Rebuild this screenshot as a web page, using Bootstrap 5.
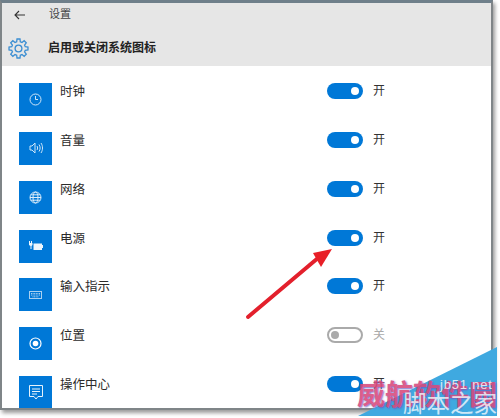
<!DOCTYPE html>
<html lang="zh-CN">
<head>
  <meta charset="UTF-8">
  <title>设置</title>
  <meta name="viewport" content="width=device-width, initial-scale=1">
  <link href="https://cdn.jsdelivr.net/npm/bootstrap@5.3.3/dist/css/bootstrap.min.css" rel="stylesheet">
  <style>
    body { width: 500px; height: 418px; overflow: hidden; background: #fff; font-family: "Liberation Sans", "Noto Sans CJK SC", sans-serif; color: #333; }
    .win { width: 493px; height: 410px; border: solid #7f8588; border-width: 3px 2px 2px 2px; border-top-color: #6f7f8a; box-shadow: 2px 3px 4px rgba(0,0,0,.4); overflow: hidden; background: #fff; }
    .win-head { height: 63px; background: #e6e6e6; }
    .head-top { height: 23px; padding-left: 12px; font-size: 11px; }
    .head-top span { margin-left: 24px; color: #444; }
    .head-main { height: 40px; padding: 4px 0 0 6px; font-size: 12px; font-weight: 700; color: #222; }
    .head-main span { margin-left: 19px; }
    .rows { padding: 17px 0 0 17px; }
    .sys-row { height: 48.85px; flex: none; }
    .tile { width: 33px; height: 33px; background: #0078d7; flex: none; }
    .sys-name { width: 275px; padding: 1px 0 0 8px; font-size: 12.5px; line-height: 16px; color: #2b2b2b; }
    .tog { width: 36px; height: 16px; border-radius: 8px; background: #0078d7; position: relative; flex: none; }
    .tog::after { content: ""; position: absolute; width: 8px; height: 8px; border-radius: 50%; background: #fff; top: 4px; right: 4px; }
    .tog.off { background: #fff; border: 2px solid #aaa; }
    .tog.off::after { background: #aaa; top: 2px; right: auto; left: 2px; }
    .tog-text { margin-left: 10px; font-size: 12px; line-height: 16px; color: #333; }
    .tog-text.off { color: #aaa; }
    .over { position: absolute; left: 0; top: 0; pointer-events: none; }
    .wm-a { position: absolute; left: 440px; top: 378px; color: #f2f9fd; font-size: 13px; line-height: 14px; letter-spacing: .8px; opacity: .85; }
    .wm-b { position: absolute; left: 403px; top: 392px; color: #f2f9fd; font-size: 23.500px; line-height: 24px; white-space: nowrap; opacity: .8; }
    .wm-c { position: absolute; left: 357px; top: 381px; color: #d8487c; font-size: 28px; line-height: 30px; font-weight: 700; white-space: nowrap; opacity: .88; text-shadow: 1px 1px 2px #6a5cc4; }
  </style>
</head>
<body class="position-relative">

  <div class="win">
    <div class="win-head">
      <div class="head-top d-flex align-items-center">
        <svg width="11" height="10" viewBox="0 0 11 10" fill="none" stroke="#333" stroke-width="1.1"><path d="M11 5H1M5 1 1 5l4 4"/></svg>
        <span>设置</span>
      </div>
      <div class="head-main d-flex align-items-center">
        <svg width="21" height="21" viewBox="-10.500 -10.500 21 21" fill="none" stroke="#3b8ed2" stroke-width="1.300"><path d="M6.760-1.810 9.480-1.500V1.500L6.760 1.810 6.060 3.500 7.760 5.640 5.640 7.760 3.500 6.060 1.810 6.760 1.500 9.480H-1.500L-1.810 6.760-3.500 6.060-5.640 7.760-7.760 5.640-6.060 3.500-6.760 1.810-9.480 1.500V-1.500L-6.760-1.810-6.060-3.500-7.760-5.640-5.640-7.760-3.500-6.060-1.810-6.760-1.500-9.480H1.500L1.810-6.760 3.500-6.060 5.640-7.760 7.760-5.640 6.060-3.500z"/><circle r="3.400"/></svg>
        <span>启用或关闭系统图标</span>
      </div>
    </div>

    <div class="rows">
      <div class="sys-row d-flex">
        <div class="tile d-flex align-items-center justify-content-center">
          <svg width="13" height="13" viewBox="0 0 13 13" fill="none" stroke="#cfe6f8"><circle cx="6.500" cy="6.500" r="5.500"/><path d="M6.500 3v3.500h2.500"/></svg>
        </div>
        <div class="sys-name">时钟</div>
        <div class="tog"></div><div class="tog-text">开</div>
      </div>
      <div class="sys-row d-flex">
        <div class="tile d-flex align-items-center justify-content-center">
          <svg width="14" height="12" viewBox="0 0 14 12" fill="none" stroke="#cfe6f8"><path d="M1 4h2l3-3v10L3 8H1zM8 4c.8 1.200.8 2.800 0 4M10 2.500c1.500 2 1.500 5 0 7M12 1c2 3 2 7 0 10"/></svg>
        </div>
        <div class="sys-name">音量</div>
        <div class="tog"></div><div class="tog-text">开</div>
      </div>
      <div class="sys-row d-flex">
        <div class="tile d-flex align-items-center justify-content-center">
          <svg width="13" height="13" viewBox="0 0 13 13" fill="none" stroke="#dcedfa"><circle cx="6.500" cy="6.500" r="5.500"/><ellipse cx="6.500" cy="6.500" rx="2.500" ry="5.500"/><path d="M1 6.500h11M1.800 3.800h9.400M1.800 9.200h9.400"/></svg>
        </div>
        <div class="sys-name">网络</div>
        <div class="tog"></div><div class="tog-text">开</div>
      </div>
      <div class="sys-row d-flex">
        <div class="tile d-flex align-items-center justify-content-center">
          <svg width="14" height="10" viewBox="0 0 14 10" fill="#eef6fc"><path d="M0 0h1v2h1V0h1v2h.500v2L2.500 5v3h-1V5L0 4z"/><path d="M4.500 2.500H13V4h1v3h-1v2H4.500z"/></svg>
        </div>
        <div class="sys-name">电源</div>
        <div class="tog"></div><div class="tog-text">开</div>
      </div>
      <div class="sys-row d-flex">
        <div class="tile d-flex align-items-center justify-content-center">
          <svg width="13" height="8" viewBox="0 0 13 8" fill="none" stroke="#a9d0f0"><rect x=".5" y=".5" width="12" height="7"/><path d="M2 2.500h9M2 4h9M3.500 5.800h6" stroke-dasharray="1 .6"/></svg>
        </div>
        <div class="sys-name">输入指示</div>
        <div class="tog"></div><div class="tog-text">开</div>
      </div>
      <div class="sys-row d-flex">
        <div class="tile d-flex align-items-center justify-content-center">
          <svg width="13" height="13" viewBox="0 0 13 13"><circle cx="6.500" cy="6.500" r="5.500" fill="none" stroke="#fff" stroke-width="1.200"/><circle cx="6.500" cy="6.500" r="2.800" fill="#fff"/></svg>
        </div>
        <div class="sys-name">位置</div>
        <div class="tog off"></div><div class="tog-text off">关</div>
      </div>
      <div class="sys-row d-flex">
        <div class="tile d-flex align-items-center justify-content-center">
          <svg width="14" height="15" viewBox="0 0 14 15" fill="none" stroke="#e6f2fb"><path d="M.5.500h13v11H9L7 14 5 11.500H.5zM3 4h8M3 6.500h8M3 9h5"/></svg>
        </div>
        <div class="sys-name">操作中心</div>
        <div class="tog"></div><div class="tog-text">开</div>
      </div>
    </div>
  </div>

  <!-- red arrow and watermark corner -->
  <svg class="over" width="500" height="418" viewBox="0 0 500 418">
    <path d="M248 317 318 258" stroke="#e3202c" stroke-width="4" stroke-linecap="round"/>
    <path d="M332 249 313 253 321 267z" fill="#e81f27"/>
    <path d="M358 416 497 347V416z" fill="#3fa9e0"/>
  </svg>
  <div class="wm-c">威航软件园</div>
  <div class="wm-a">jb51.net</div>
  <div class="wm-b">脚本之家</div>

  <script src="https://cdn.jsdelivr.net/npm/bootstrap@5.3.3/dist/js/bootstrap.bundle.min.js"></script>
</body>
</html>
